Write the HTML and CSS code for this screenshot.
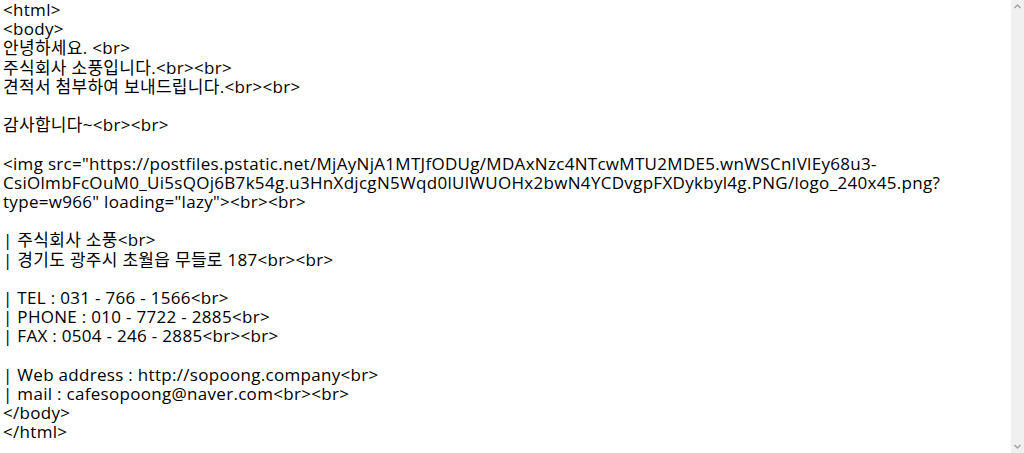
FILE: index.html
```html
<!DOCTYPE html>
<html lang="ko">
<head>
<meta charset="utf-8">
<link rel="stylesheet" href="styles.css">
</head>
<body>
<div class="window">
<pre class="source">&lt;html&gt;
&lt;body&gt;
안녕하세요. &lt;br&gt;
주식회사 소풍입니다.&lt;br&gt;&lt;br&gt;
견적서 첨부하여 보내드립니다.&lt;br&gt;&lt;br&gt;

감사합니다~&lt;br&gt;&lt;br&gt;

&lt;img src="https://postfiles.pstatic.net/MjAyNjA1MTJfODUg/MDAxNzc4NTcwMTU2MDE5.wnWSCnIVlEy68u3-
CsiOlmbFcOuM0_Ui5sQOj6B7k54g.u3HnXdjcgN5Wqd0lUlWUOHx2bwN4YCDvgpFXDykbyl4g.PNG/logo_240x45.png?
type=w966" loading="lazy"&gt;&lt;br&gt;&lt;br&gt;

| 주식회사 소풍&lt;br&gt;
| 경기도 광주시 초월읍 무들로 187&lt;br&gt;&lt;br&gt;

| TEL : 031 - 766 - 1566&lt;br&gt;
| PHONE : 010 - 7722 - 2885&lt;br&gt;
| FAX : 0504 - 246 - 2885&lt;br&gt;&lt;br&gt;

| Web address : http://sopoong.company&lt;br&gt;
| mail : cafesopoong@naver.com&lt;br&gt;&lt;br&gt;
&lt;/body&gt;
&lt;/html&gt;</pre>
<div class="scrollbar">
<svg class="arrow" width="13" height="13" viewBox="0 0 13 13"><path d="M3.5 8 L6.5 5 L9.5 8" fill="none" stroke="#a3a3a3" stroke-width="1.5"/></svg>
<svg class="arrow" width="13" height="13" viewBox="0 0 13 13"><path d="M3.5 5 L6.5 8 L9.5 5" fill="none" stroke="#a3a3a3" stroke-width="1.5"/></svg>
</div>
</div>
</body>
</html>
```
FILE: styles.css
```css
html, body {
  margin: 0;
  padding: 0;
  background: #ffffff;
}
.window {
  display: flex;
  width: 1024px;
  height: 453px;
}
.source {
  flex: 1;
  min-width: 0;
  margin: 0;
  padding: 0 0 0 3px;
  font-family: "Open Sans", "Noto Sans CJK KR", sans-serif;
  font-size: 17px;
  letter-spacing: 0.3px;
  line-height: 19.2px;
  color: #000000;
  white-space: pre;
}
.scrollbar {
  width: 13px;
  flex: none;
  background: #f0f0f0;
  display: flex;
  flex-direction: column;
  justify-content: space-between;
}
.arrow {
  display: block;
}
```
